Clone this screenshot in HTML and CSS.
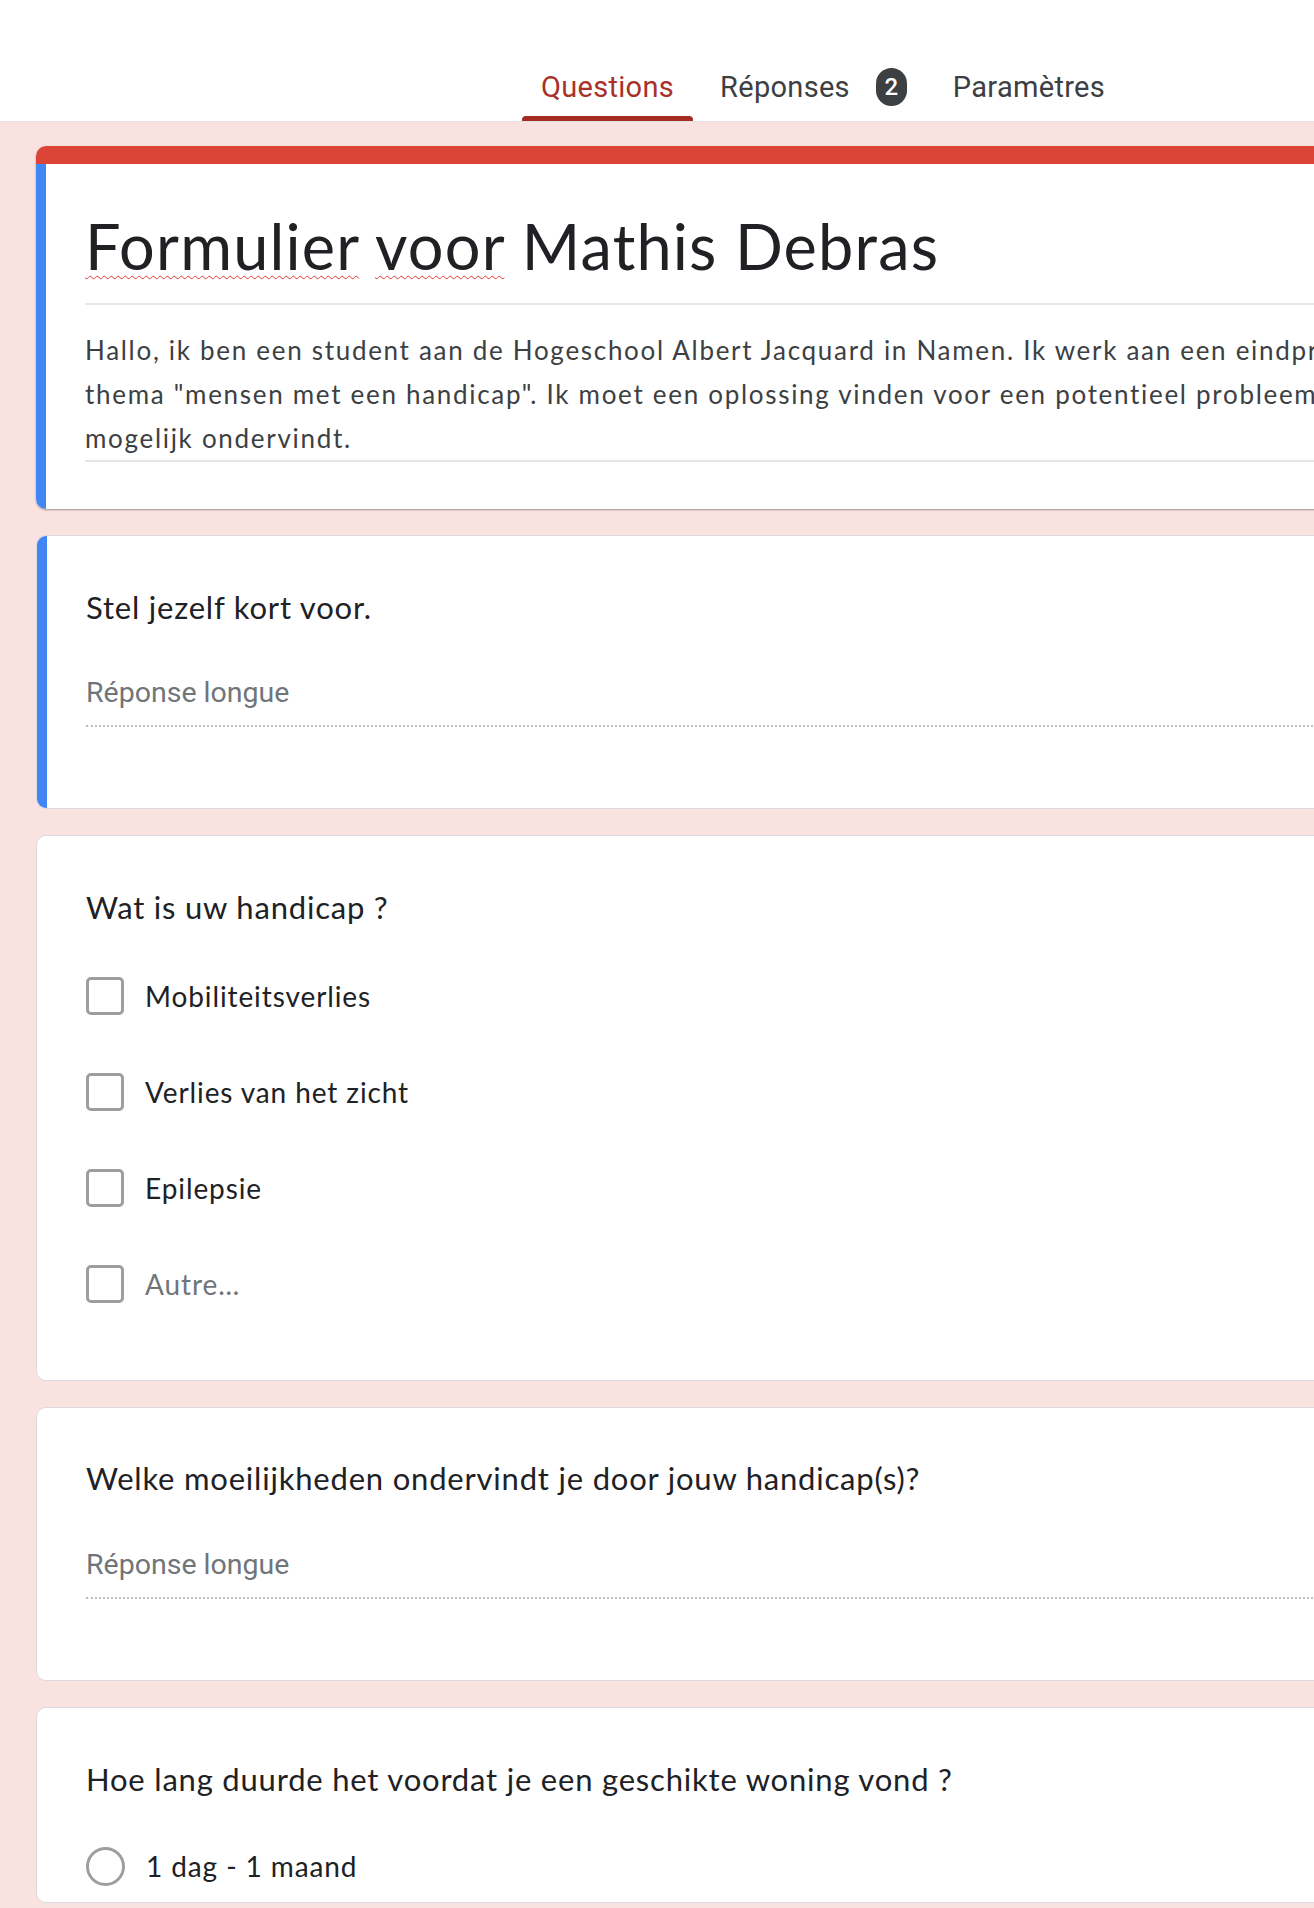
FILE: index.html
```html
<!DOCTYPE html>
<html lang="nl">
<head>
<meta charset="utf-8">
<title>Formulier voor Mathis Debras</title>
<link rel="stylesheet" href="styles.css">
</head>
<body>
<header class="topbar">
  <nav class="tabs">
    <div class="tab tab-active">Questions</div>
    <div class="tab">Réponses <span class="badge">2</span></div>
    <div class="tab">Paramètres</div>
  </nav>
</header>
<main class="form">
  <section class="card card-title">
    <div class="redbar"></div>
    <div class="card-body accent">
      <h1 class="form-title"><span class="spell">Formulier</span> <span class="spell">voor</span> Mathis Debras</h1>
      <p class="form-desc">Hallo, ik ben een student aan de Hogeschool Albert Jacquard in Namen. Ik werk aan een eindproject rond het<br>thema "mensen met een handicap". Ik moet een oplossing vinden voor een potentieel probleem dat u<br>mogelijk ondervindt.</p>
    </div>
  </section>

  <section class="card">
    <div class="card-body accent q-short">
      <div class="question">Stel jezelf kort voor.</div>
      <div class="answer">Réponse longue</div>
    </div>
  </section>

  <section class="card">
    <div class="card-body q-check">
      <div class="question">Wat is uw handicap ?</div>
      <div class="options">
        <div class="option"><span class="checkbox"></span><span class="opt-label">Mobiliteitsverlies</span></div>
        <div class="option"><span class="checkbox"></span><span class="opt-label">Verlies van het zicht</span></div>
        <div class="option"><span class="checkbox"></span><span class="opt-label">Epilepsie</span></div>
        <div class="option"><span class="checkbox"></span><span class="opt-label opt-other">Autre…</span></div>
      </div>
    </div>
  </section>

  <section class="card">
    <div class="card-body q-long">
      <div class="question">Welke moeilijkheden ondervindt je door jouw handicap(s)?</div>
      <div class="answer">Réponse longue</div>
    </div>
  </section>

  <section class="card card-last">
    <div class="card-body q-radio">
      <div class="question">Hoe lang duurde het voordat je een geschikte woning vond ?</div>
      <div class="option radio-row"><span class="radio"></span><span class="opt-label">1 dag - 1 maand</span></div>
    </div>
  </section>
</main>
</body>
</html>
```

FILE: styles.css
```css
html, body {
  margin: 0;
  padding: 0;
}
body {
  width: 1314px;
  height: 1908px;
  overflow: hidden;
  background: #fae2e0;
  font-family: "Lato", "Open Sans", sans-serif;
  color: #202124;
}

.topbar {
  height: 121px;
  background: #ffffff;
  border-bottom: 1px solid #e3e3e3;
  display: flex;
}
.tabs {
  display: flex;
  gap: 8px;
  margin-left: 522px;
  height: 121px;
}
.tab {
  position: relative;
  display: flex;
  align-items: center;
  gap: 26px;
  padding: 52px 19px 0;
  font-family: "Roboto", sans-serif;
  font-size: 29px;
  letter-spacing: 0.3px;
  color: #3c4043;
  line-height: 30px;
}
.tab-active {
  color: #a8322a;
}
.tab-active::after {
  content: "";
  position: absolute;
  left: 0;
  right: 0;
  bottom: 0;
  height: 5px;
  background: #a52a22;
  border-radius: 4px 4px 0 0;
}
.badge {
  display: inline-flex;
  align-items: center;
  justify-content: center;
  width: 31px;
  height: 38px;
  border-radius: 16px;
  background: #3c4043;
  color: #ffffff;
  font-size: 24px;
  font-weight: 500;
  letter-spacing: 0;
}

.form {
  display: flex;
  flex-direction: column;
  gap: 26px;
  padding: 24px 0 0 36px;
}
.card {
  width: 1400px;
  background: #ffffff;
  border: 1px solid #dadce0;
  border-radius: 10px;
  overflow: hidden;
}
.card-title {
  border: none;
  box-shadow: 0 1px 2px rgba(0, 0, 0, 0.35);
}
.redbar {
  height: 18px;
  background: #db4437;
}
.card-body {
  padding-left: 49px;
}
.card-body.accent {
  border-left: 10px solid #4285f4;
  padding-left: 39px;
}
.card-title .card-body {
  padding-top: 44px;
  padding-bottom: 47px;
}
.form-title {
  margin: 0;
  font-weight: 400;
  font-size: 63px;
  letter-spacing: 1.2px;
  line-height: 76px;
  padding-bottom: 19px;
  border-bottom: 2px solid #e6e6e6;
  white-space: nowrap;
}
.spell {
  text-decoration: underline wavy #e53935;
  text-decoration-thickness: 1px;
  text-underline-offset: 5px;
}
.form-desc {
  margin: 23px 0 0;
  font-size: 26px;
  letter-spacing: 1.7px;
  line-height: 44px;
  color: #3c4043;
  white-space: nowrap;
  border-bottom: 2px solid #e6e6e6;
}

.question {
  font-size: 31px;
  letter-spacing: 0.8px;
  line-height: 40px;
  white-space: nowrap;
}
.answer {
  font-family: "Roboto", sans-serif;
  font-size: 28.5px;
  line-height: 38px;
  color: #70757a;
  padding-bottom: 13px;
  border-bottom: 2px dotted #bdbdbd;
}
.q-short {
  padding-top: 51px;
  padding-bottom: 81px;
}
.q-short .answer {
  margin-top: 47px;
}
.q-long {
  padding-top: 50px;
  padding-bottom: 81px;
}
.q-long .answer {
  margin-top: 48px;
}
.q-check {
  padding-top: 51px;
  padding-bottom: 48px;
}
.options {
  margin-top: 21px;
  display: flex;
  flex-direction: column;
}
.option {
  display: flex;
  align-items: center;
  height: 96px;
  gap: 21px;
}
.checkbox {
  box-sizing: border-box;
  width: 38px;
  height: 38px;
  border: 3px solid #9e9e9e;
  border-radius: 5px;
  flex: none;
}
.opt-label {
  font-size: 28px;
  letter-spacing: 0.9px;
  color: #202124;
}
.opt-other {
  color: #70757a;
}
.q-radio {
  padding-top: 51px;
  height: 200px;
}
.radio-row {
  margin-top: 47px;
  height: 40px;
}
.radio {
  box-sizing: border-box;
  width: 39px;
  height: 39px;
  border: 3px solid #9e9e9e;
  border-radius: 50%;
  flex: none;
}
.card-last {
  height: 194px;
}
```
